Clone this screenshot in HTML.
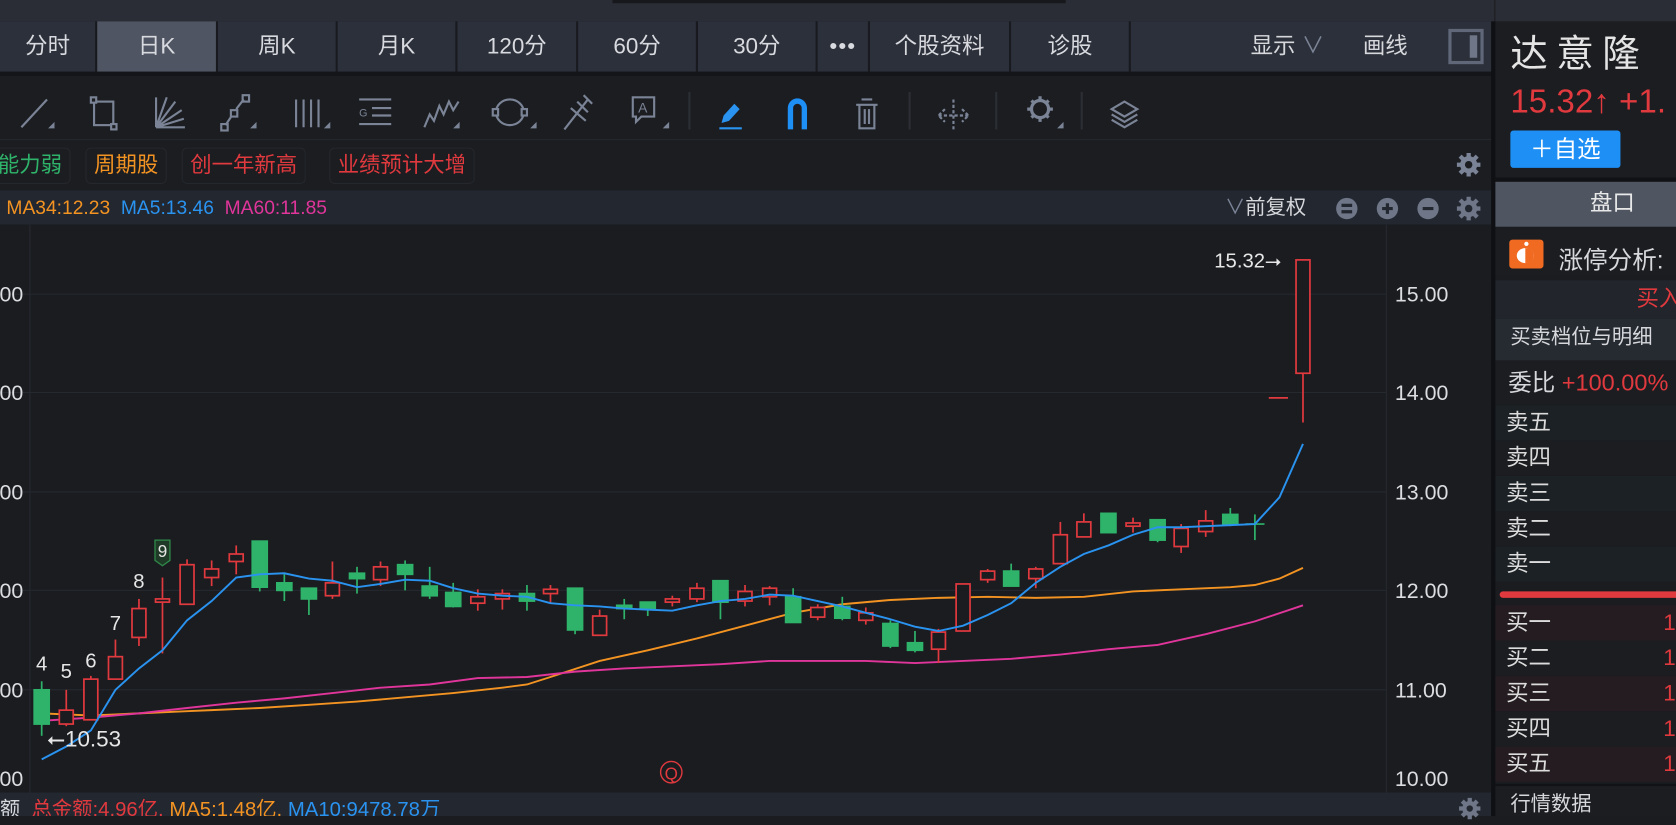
<!DOCTYPE html>
<html><head><meta charset="utf-8"><style>
*{margin:0;padding:0;box-sizing:border-box}
html,body{width:1676px;height:816px;overflow:hidden;background:#1a1c20}
#w{position:absolute;left:0;top:0;width:1568px;height:763px;transform:scale(1.0689,1.0695);transform-origin:0 0;font-family:"Liberation Sans","Noto Sans CJK SC",sans-serif;color:#d6d8dc}
.a{position:absolute}
.tab{position:absolute;top:20px;height:47px;line-height:47px;text-align:center;font-size:21px;color:#d8dadf;background:#2c303a;border-right:2px solid #181a1f}
.tag{position:absolute;top:138px;height:34px;line-height:32px;border:1px solid #24272c;border-radius:5px;font-size:20px;padding:0 7px}
.row{position:absolute;left:1399px;width:169px;height:33px;line-height:33px;font-size:21px;padding-left:10px;color:#dcdcdc}
</style></head><body><div id="w">
<div class="a" style="left:0;top:0;width:1398px;height:20px;background:#2a2d35"></div>
<div class="a" style="left:573px;top:0;width:424px;height:3px;background:#17181b"></div>
<div class="a" style="left:0;top:20px;width:1398px;height:47px;background:#2c303a"></div>
<div class="tab" style="left:0;width:91px">分时</div>
<div class="tab" style="left:91px;width:113px;background:#4f5562">日K</div>
<div class="tab" style="left:204px;width:112px">周K</div>
<div class="tab" style="left:316px;width:112px">月K</div>
<div class="tab" style="left:428px;width:113px">120分</div>
<div class="tab" style="left:541px;width:112px">60分</div>
<div class="tab" style="left:653px;width:112px">30分</div>
<div class="tab" style="left:765px;width:49px;letter-spacing:1px">•••</div>
<div class="tab" style="left:814px;width:132px">个股资料</div>
<div class="tab" style="left:946px;width:112px">诊股</div>
<div class="a" style="left:1170px;top:20px;line-height:47px;font-size:21px">显示 <span style="color:#7b8496">∨</span></div>
<div class="a" style="left:1275px;top:20px;line-height:47px;font-size:21px">画线</div>
<div class="a" style="left:1355px;top:27px;width:33px;height:33px;border:3px solid #5f6778"><div class="a" style="right:3px;top:3px;width:7px;height:21px;background:#6e7687"></div></div>
<div class="a" style="left:0;top:67px;width:1398px;height:4px;background:#141519"></div>
<div class="a" style="left:0;top:71px;width:1398px;height:59px;background:#1b1d21"></div>
<svg class="a" style="left:0;top:71px" width="1120" height="59" fill="none" stroke="#7b8496" stroke-width="2">
<line x1="20" y1="48" x2="44" y2="22"/><path d="M45 49l6 0 0-6z" fill="#7b8496" stroke="none"/>
<rect x="88" y="24" width="18" height="22"/><rect x="85" y="20" width="5" height="5" fill="#1b1d21"/><rect x="104" y="45" width="5" height="5" fill="#1b1d21"/>
<path d="M146 48V20M146 48L156 20M146 48L164 24M146 48L170 32M146 48L172 40M146 48H173"/>
<path d="M211 46l6-9M221 31l7-9"/><rect x="207" y="45" width="6" height="6"/><rect x="216" y="32" width="6" height="6"/><rect x="227" y="18" width="6" height="6"/><path d="M234 49l6 0 0-6z" fill="#7b8496" stroke="none"/>
<path d="M277 22v26M284 22v26M291 22v26M298 22v26"/><path d="M303 49l6 0 0-6z" fill="#7b8496" stroke="none"/>
<path d="M336 22h30M336 45h30M348 30h18M348 37h18"/><text x="336" y="38" font-size="10" fill="#7b8496" stroke="none" font-family="Liberation Sans">G</text>
<path d="M397 48l5-12 4 6 5-14 4 8 5-12 4 8 5-8"/><path d="M424 49l6 0 0-6z" fill="#7b8496" stroke="none"/>
<ellipse cx="477" cy="34" rx="13" ry="12"/><rect x="461" y="31" width="5" height="6" fill="#1b1d21"/><rect x="488" y="31" width="5" height="6" fill="#1b1d21"/><path d="M496 49l6 0 0-6z" fill="#7b8496" stroke="none"/>
<path d="M528 50l22-28M534 30l14 12M540 24l10 10M546 18l8 8"/>
<path d="M592 20h20v18h-12l-5 5v-5h-3z"/><text x="597" y="34" font-size="13" fill="#7b8496" stroke="none" font-family="Liberation Sans">A</text><path d="M620 49l6 0 0-6z" fill="#7b8496" stroke="none"/>
<line x1="645" y1="15" x2="645" y2="50" stroke="#2b2e34"/>
<path d="M675 44l2-7 10-11 5 5-10 11z" fill="#2a93f0" stroke="none"/><line x1="673" y1="49" x2="694" y2="49" stroke="#2a93f0"/>
<path d="M737 50V30a9 9 0 0 1 18 0v20h-5V30a4 4 0 0 0-8 0v20z" fill="#1e8ff5" stroke="none"/>
<path d="M801 27h20M806 22h10M804 27v22h14V27M809 31v14M813 31v14"/>
<line x1="851" y1="15" x2="851" y2="50" stroke="#2b2e34"/>
<path d="M878 37h28M884 31l-6 6 6 6M900 31l6 6-6 6M892 22v30" stroke-dasharray="3 2"/>
<line x1="932" y1="15" x2="932" y2="50" stroke="#2b2e34"/>
<circle cx="973" cy="31" r="8" stroke-width="3"/><path d="M973 19v4M973 39v4M961 31h4M981 31h4M965 23l3 3M978 36l3 3M965 39l3-3M978 26l3-3" stroke-width="3"/><path d="M989 49l6 0 0-6z" fill="#7b8496" stroke="none"/>
<line x1="1012" y1="15" x2="1012" y2="50" stroke="#2b2e34"/>
<path d="M1052 24l-12 7 12 7 12-7zM1040 36l12 7 12-7M1040 41l12 7 12-7"/>
</svg>
<div class="a" style="left:0;top:130px;width:1398px;height:48px;background:#1b1d21;border-top:1px solid #25282e"></div>
<div class="tag" style="left:-10px;color:#2fb36a">能力弱</div>
<div class="tag" style="left:80px;color:#f39322">周期股</div>
<div class="tag" style="left:170px;color:#e0393e">创一年新高</div>
<div class="tag" style="left:308px;color:#e0393e">业绩预计大增</div>
<svg class="a" style="left:1362px;top:142px" width="24" height="24"><g fill="#7b8496"><circle cx="12" cy="12" r="8"/><g stroke="#7b8496" stroke-width="4"><path d="M12 1v22M1 12h22M4 4l16 16M20 4L4 20"/></g><circle cx="12" cy="12" r="3.5" fill="#1b1d21"/></g></svg>
<div class="a" style="left:0;top:178px;width:1398px;height:32px;background:#232730;font-size:18px;line-height:33px;white-space:nowrap"><span style="color:#f39322;margin-left:6px">MA34:12.23</span> &nbsp;<span style="color:#2a93f0">MA5:13.46</span> &nbsp;<span style="color:#e0359a">MA60:11.85</span></div>
<div class="a" style="left:1146px;top:178px;line-height:33px;font-size:19px"><span style="color:#7b8496">∨</span>前复权</div>
<svg class="a" style="left:1248px;top:183px" width="140" height="24"><g fill="#6e7687"><circle cx="12" cy="12" r="10"/><circle cx="50" cy="12" r="10"/><circle cx="88" cy="12" r="10"/></g><g stroke="#232730" stroke-width="3"><path d="M7 9h10M7 15h10M45 12h10M50 7v10M83 12h10"/></g><g transform="translate(114,0)" fill="#6e7687"><circle cx="12" cy="12" r="8"/><g stroke="#6e7687" stroke-width="4"><path d="M12 1v22M1 12h22M4 4l16 16M20 4L4 20"/></g><circle cx="12" cy="12" r="3.5" fill="#232730"/></g></svg>
<svg class="a" style="left:0;top:210px" width="1398" height="531" viewBox="0 210 1398 531">
<rect x="0" y="210" width="1398" height="531" fill="#1a1c20"/>
<g stroke="#262930" stroke-width="1"><path d="M0 275H1297M0 367H1297M0 460H1297M0 552H1297M0 645H1297"/><path d="M28 210V741M1297 210V741"/></g>
<g fill="#dcdde0" font-size="20" font-family="Liberation Sans"><text x="-6" y="282">.00</text><text x="-6" y="374">.00</text><text x="-6" y="467">.00</text><text x="-6" y="559">.00</text><text x="-6" y="652">.00</text><text x="-6" y="735">.00</text>
<text x="1305" y="282">15.00</text><text x="1305" y="374">14.00</text><text x="1305" y="467">13.00</text><text x="1305" y="559">12.00</text><text x="1305" y="652">11.00</text><text x="1305" y="735">10.00</text></g>
<polyline fill="none" stroke="#f39322" stroke-width="1.8" points="39,667 62,668 85,669 108,668 130,667 152,666 175,665 198,664 243,662 289,659 334,656 379,652 424,648 470,643 493,640 515,633 561,618 606,608 652,597 697,585 742,573 788,565 833,561 878,559 924,558 969,559 1014,558 1060,553 1105,551 1151,549 1174,547 1197,541 1219,531"/>
<polyline fill="none" stroke="#e0359a" stroke-width="1.8" points="39,674 85,671 130,667 175,662 221,657 266,653 311,648 356,643 402,640 447,634 493,633 538,628 584,625 629,623 674,621 720,618 765,618 810,618 856,620 901,618 946,616 992,612 1037,607 1083,603 1128,593 1174,581 1219,566"/>
<g stroke="#e0393e" stroke-width="1.6" fill="#1a1c20">
<line x1="62" y1="645" x2="62" y2="679"/><rect x="55.5" y="664" width="13" height="13"/>
<line x1="85" y1="632" x2="85" y2="673"/><rect x="78.5" y="635" width="13" height="38"/>
<line x1="108" y1="598" x2="108" y2="635"/><rect x="101.5" y="614" width="13" height="21"/>
<line x1="130" y1="560" x2="130" y2="604"/><rect x="123.5" y="569" width="13" height="27"/>
<line x1="152" y1="540" x2="152" y2="611"/><rect x="145.5" y="560" width="13" height="3"/>
<line x1="175" y1="523" x2="175" y2="565"/><rect x="168.5" y="528" width="13" height="37"/>
<line x1="198" y1="524" x2="198" y2="548"/><rect x="191.5" y="532" width="13" height="8"/>
<line x1="221" y1="510" x2="221" y2="537"/><rect x="214.5" y="518" width="13" height="7"/>
<line x1="311" y1="525" x2="311" y2="560"/><rect x="304.5" y="545" width="13" height="12"/>
<line x1="356" y1="525" x2="356" y2="548"/><rect x="349.5" y="530" width="13" height="12"/>
<line x1="447" y1="551" x2="447" y2="571"/><rect x="440.5" y="558" width="13" height="6"/>
<line x1="470" y1="551" x2="470" y2="570"/><rect x="463.5" y="555" width="13" height="5"/>
<line x1="515" y1="547" x2="515" y2="564"/><rect x="508.5" y="551" width="13" height="4"/>
<line x1="561" y1="570" x2="561" y2="594"/><rect x="554.5" y="576" width="13" height="18"/>
<line x1="629" y1="557" x2="629" y2="567"/><rect x="622.5" y="560" width="13" height="3"/>
<line x1="652" y1="545" x2="652" y2="563"/><rect x="645.5" y="550" width="13" height="10"/>
<line x1="697" y1="547" x2="697" y2="567"/><rect x="690.5" y="553" width="13" height="9"/>
<line x1="720" y1="548" x2="720" y2="566"/><rect x="713.5" y="550" width="13" height="8"/>
<line x1="765" y1="565" x2="765" y2="580"/><rect x="758.5" y="568" width="13" height="9"/>
<line x1="810" y1="568" x2="810" y2="584"/><rect x="803.5" y="573" width="13" height="7"/>
<line x1="878" y1="588" x2="878" y2="620"/><rect x="871.5" y="591" width="13" height="16"/>
<rect x="894.5" y="546" width="13" height="44"/>
<line x1="924" y1="532" x2="924" y2="545"/><rect x="917.5" y="534" width="13" height="8"/>
<line x1="969" y1="530" x2="969" y2="550"/><rect x="962.5" y="532" width="13" height="9"/>
<line x1="992" y1="488" x2="992" y2="527"/><rect x="985.5" y="500" width="13" height="27"/>
<line x1="1014" y1="480" x2="1014" y2="502"/><rect x="1007.5" y="488" width="13" height="14"/>
<line x1="1060" y1="484" x2="1060" y2="498"/><rect x="1053.5" y="489" width="13" height="3"/>
<line x1="1105" y1="490" x2="1105" y2="517"/><rect x="1098.5" y="494" width="13" height="17"/>
<line x1="1128" y1="477" x2="1128" y2="502"/><rect x="1121.5" y="487" width="13" height="10"/>
<line x1="1187" y1="372" x2="1205" y2="372"/>
<line x1="1219" y1="243" x2="1219" y2="395"/><rect x="1212.5" y="243" width="13" height="106"/>
</g>
<g stroke="#2fb36a" stroke-width="1.6" fill="#2fb36a">
<line x1="39" y1="637" x2="39" y2="688"/><rect x="32" y="645" width="14" height="32"/>
<line x1="243" y1="506" x2="243" y2="553"/><rect x="236" y="506" width="14" height="43"/>
<line x1="266" y1="537" x2="266" y2="562"/><rect x="259" y="545" width="14" height="7"/>
<line x1="289" y1="550" x2="289" y2="575"/><rect x="282" y="550" width="14" height="10"/>
<line x1="334" y1="530" x2="334" y2="555"/><rect x="327" y="536" width="14" height="5"/>
<line x1="379" y1="524" x2="379" y2="552"/><rect x="372" y="528" width="14" height="9"/>
<line x1="402" y1="530" x2="402" y2="560"/><rect x="395" y="548" width="14" height="9"/>
<line x1="424" y1="545" x2="424" y2="568"/><rect x="417" y="554" width="14" height="13"/>
<line x1="493" y1="547" x2="493" y2="571"/><rect x="486" y="555" width="14" height="7"/>
<line x1="538" y1="550" x2="538" y2="593"/><rect x="531" y="550" width="14" height="39"/>
<line x1="584" y1="560" x2="584" y2="579"/><rect x="577" y="566" width="14" height="3"/>
<line x1="606" y1="563" x2="606" y2="576"/><rect x="599" y="563" width="14" height="6"/>
<line x1="674" y1="543" x2="674" y2="579"/><rect x="667" y="543" width="14" height="20"/>
<line x1="742" y1="550" x2="742" y2="582"/><rect x="735" y="558" width="14" height="24"/>
<line x1="788" y1="558" x2="788" y2="580"/><rect x="781" y="567" width="14" height="11"/>
<line x1="833" y1="580" x2="833" y2="606"/><rect x="826" y="583" width="14" height="21"/>
<line x1="856" y1="590" x2="856" y2="610"/><rect x="849" y="601" width="14" height="7"/>
<line x1="946" y1="527" x2="946" y2="548"/><rect x="939" y="534" width="14" height="14"/>
<rect x="1030" y="480" width="14" height="18"/>
<line x1="1083" y1="486" x2="1083" y2="507"/><rect x="1076" y="486" width="14" height="19"/>
<line x1="1151" y1="475" x2="1151" y2="492"/><rect x="1144" y="481" width="14" height="9"/>
<line x1="1174" y1="481" x2="1174" y2="505"/><line x1="1165" y1="490" x2="1183" y2="490"/>
</g>
<polyline fill="none" stroke="#2a93f0" stroke-width="1.8" points="39,710 62,698 85,683 108,645 130,625 152,608 175,580 198,562 221,540 243,537 266,536 289,541 311,543 334,549 356,546 379,542 402,543 424,550 447,555 470,557 493,558 515,564 538,566 561,567 584,569 606,570 629,571 652,566 674,562 697,560 720,556 742,557 765,562 788,567 810,573 833,579 856,586 878,590 901,585 924,575 946,564 969,545 992,530 1014,518 1037,510 1060,500 1083,493 1105,493 1128,492 1151,491 1174,490 1197,465 1219,415"/>
<g fill="#e6e6e6" font-size="19" font-family="Liberation Sans" text-anchor="middle"><text x="39" y="627">4</text><text x="62" y="634">5</text><text x="85" y="624">6</text><text x="108" y="589">7</text><text x="130" y="550">8</text></g>
<path d="M145 505h14v19l-7 5-7-5z" fill="#1f3a26" stroke="#2f8a4a" stroke-width="1.2"/><text x="152" y="521" fill="#e6e6e6" font-size="16" text-anchor="middle" font-family="Liberation Sans">9</text>
<text x="44" y="698" fill="#e6e6e6" font-size="21" font-family="Liberation Sans">⭠10.53</text>
<text x="1136" y="250" fill="#e6e6e6" font-size="19" font-family="Liberation Sans">15.32⭢</text>
<circle cx="628" cy="722" r="10" fill="none" stroke="#e0393e" stroke-width="1.3"/><text x="628" y="729" fill="#e0393e" font-size="16" text-anchor="middle" font-family="Liberation Sans">Q</text>
</svg>
<div class="a" style="left:0;top:741px;width:1398px;height:22px;background:#232730;font-size:19px;line-height:34px;white-space:nowrap;overflow:hidden"><span>额</span> &nbsp;<span style="color:#e0393e">总金额:4.96亿,</span> <span style="color:#f39322">MA5:1.48亿,</span> <span style="color:#2a93f0">MA10:9478.78万</span></div>
<div class="a" style="left:1395px;top:20px;width:4px;height:743px;background:#0f1013"></div>
<div class="a" style="left:1399px;top:0;width:169px;height:20px;background:#2a2d35"></div>
<div class="a" style="left:1399px;top:20px;width:169px;height:146px;background:#1b1d21"></div>
<div class="a" style="left:1413px;top:22px;font-size:35px;letter-spacing:8px;color:#e4e4e4;white-space:nowrap">达意隆</div>
<div class="a" style="left:1413px;top:77px;font-size:31px;color:#e0393e;white-space:nowrap">15.32↑ +1.</div>
<div class="a" style="left:1413px;top:122px;width:103px;height:35px;background:#1e8ff5;border-radius:3px;color:#fff;font-size:22px;line-height:35px;text-align:center">＋自选</div>
<div class="a" style="left:1399px;top:166px;width:169px;height:4px;background:#111215"></div>
<div class="a" style="left:1399px;top:170px;width:169px;height:42px;background:#4f5662;text-align:center;line-height:42px;font-size:21px;color:#e8e8e8;padding-left:50px">盘口</div>
<div class="a" style="left:1399px;top:215px;width:169px;height:43px;background:#1b1d21"></div>
<div class="a" style="left:1412px;top:224px;width:32px;height:27px;background:#f06a22;border-radius:3px"><div class="a" style="left:7px;top:8px;width:16px;height:14px;border-radius:50%;background:#fff"></div><div class="a" style="left:15px;top:8px;width:8px;height:14px;border-radius:0 8px 8px 0;background:#f06a22"></div><div class="a" style="left:14px;top:2px;width:4px;height:4px;border-radius:50%;background:#fff"></div></div>
<div class="a" style="left:1458px;top:224px;font-size:23px;white-space:nowrap">涨停分析:</div>
<div class="a" style="left:1399px;top:262px;width:169px;height:36px;background:#22252c;color:#e0393e;font-size:21px;line-height:36px;padding-left:132px;white-space:nowrap;overflow:hidden">买入</div>
<div class="a" style="left:1399px;top:298px;width:169px;height:39px;background:#262a31;font-size:19px;line-height:36px;padding-left:14px;white-space:nowrap">买卖档位与明细</div>
<div class="a" style="left:1399px;top:337px;width:169px;height:41px;background:#1b1d21;font-size:22px;line-height:41px;padding-left:12px;white-space:nowrap;overflow:hidden">委比 <span style="color:#e0393e">+100.00%</span></div>
<div class="row" style="top:379px;background:#1b2124">卖五</div>
<div class="row" style="top:412px;background:#1b1d21">卖四</div>
<div class="row" style="top:445px;background:#1b2124">卖三</div>
<div class="row" style="top:478px;background:#1b1d21">卖二</div>
<div class="row" style="top:511px;background:#1b2124">卖一</div>
<div class="a" style="left:1403px;top:553px;width:165px;height:6px;background:#e0393e;border-radius:3px 0 0 3px"></div>
<div class="row" style="top:566px;background:#241c20">买一<span style="position:absolute;left:157px;color:#e0393e">1</span></div>
<div class="row" style="top:599px;background:#1b1d21">买二<span style="position:absolute;left:157px;color:#e0393e">1</span></div>
<div class="row" style="top:632px;background:#241c20">买三<span style="position:absolute;left:157px;color:#e0393e">1</span></div>
<div class="row" style="top:665px;background:#1b1d21">买四<span style="position:absolute;left:157px;color:#e0393e">1</span></div>
<div class="row" style="top:698px;background:#241c20">买五<span style="position:absolute;left:157px;color:#e0393e">1</span></div>
<div class="a" style="left:1399px;top:733px;width:169px;height:30px;background:#1b1d21;border-top:2px solid #111215;font-size:19px;line-height:36px;padding-left:14px">行情数据</div>
<svg class="a" style="left:1364px;top:745px" width="22" height="22"><g fill="#6e7687"><circle cx="11" cy="11" r="7"/><g stroke="#6e7687" stroke-width="4"><path d="M11 1v20M1 11h20M4 4l14 14M18 4L4 18"/></g><circle cx="11" cy="11" r="3" fill="#232730"/></g></svg>
</div></body></html>
